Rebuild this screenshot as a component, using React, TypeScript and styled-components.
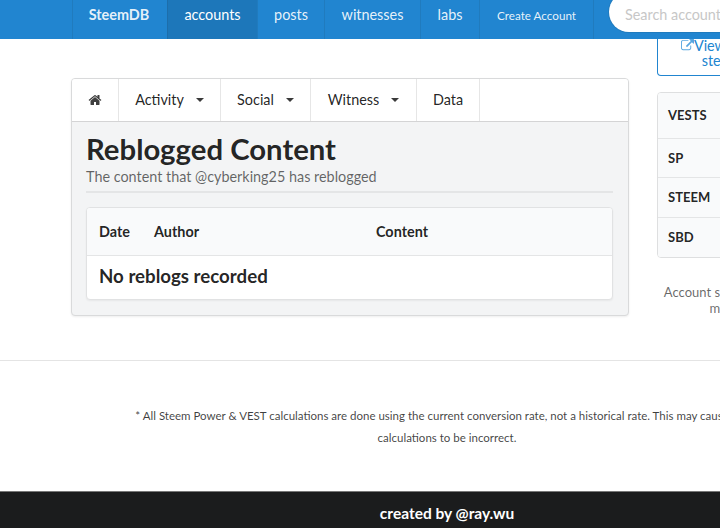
import React from "react";
import styled, { createGlobalStyle } from "styled-components";

const Global = createGlobalStyle`
  html, body { margin: 0; padding: 0; background: #fff; }
  body { width: 720px; height: 528px; overflow: hidden; font-family: Lato, "Liberation Sans", sans-serif; font-size: 14.4px; color: rgba(0,0,0,.87); }
  * { box-sizing: border-box; }
`;

const Page = styled.div`
  width: 894px;
  height: 528px;
  display: flex;
  flex-direction: column;
`;

const TopBar = styled.nav`
  height: 39px;
  flex: none;
  background: #2185d0;
  display: flex;
  padding-left: 72px;
  overflow: hidden;
`;

const NavItem = styled.a<{ $active?: boolean; $w: number; $bold?: boolean; $small?: boolean }>`
  width: ${(p) => p.$w}px;
  height: 39px;
  flex: none;
  display: flex;
  align-items: center;
  justify-content: center;
  padding-bottom: ${(p) => (p.$small ? 9 : 11)}px;
  padding-right: ${(p) => (p.$bold ? 2 : 0)}px;
  color: ${(p) => (p.$active ? "#fff" : "rgba(255,255,255,.9)")};
  background: ${(p) => (p.$active ? "rgba(0,0,0,.1)" : "transparent")};
  border-left: 1px solid rgba(34,36,38,.1);
  font-size: ${(p) => (p.$small ? 11.7 : 14.4)}px;
  font-weight: ${(p) => (p.$bold ? 700 : 400)};
`;

const LastDivider = styled.span`
  width: 1px;
  height: 39px;
  flex: none;
  background: rgba(34,36,38,.1);
`;

const SearchBox = styled.div`
  width: 220px;
  height: 40px;
  margin: -8px 0 0 15px;
  flex: none;
  background: #fff;
  border-radius: 20px;
  box-shadow: 0 0 0 1px rgba(34,36,38,.1);
  display: flex;
  align-items: flex-end;
  padding: 0 0 9px 16px;
  color: #c7c7c7;
  font-size: 14.4px;
  white-space: nowrap;
`;

const Main = styled.main`
  display: grid;
  grid-template-columns: 558px 166px;
  column-gap: 28px;
  padding-left: 71px;
  height: 322px;
  flex: none;
  border-bottom: 1px solid #e4e4e4;
  align-items: start;
`;

const LeftColumn = styled.section`
  padding-top: 39px;
`;

const Panel = styled.div`
  background: #f3f4f5;
  border: 1px solid #d9dadb;
  border-radius: 4px;
  box-shadow: 0 1px 2px rgba(34,36,38,.08);
  height: 238px;
  overflow: hidden;
`;

const TabBar = styled.div`
  height: 43px;
  background: #fff;
  border-bottom: 1px solid #d4d4d5;
  display: flex;
`;

const Tab = styled.div<{ $w: number }>`
  width: ${(p) => p.$w}px;
  flex: none;
  display: flex;
  align-items: center;
  justify-content: center;
  gap: 12px;
  padding-bottom: 1px;
  border-right: 1px solid #e6e6e6;
  font-size: 14.4px;
  color: rgba(0,0,0,.87);
`;

const Caret = styled.span`
  width: 0;
  height: 0;
  margin-top: 1px;
  border-left: 4px solid transparent;
  border-right: 4px solid transparent;
  border-top: 4px solid #3a3a3a;
`;

const PanelBody = styled.div`
  padding: 10px 15px 0 14px;
`;

const Title = styled.h1`
  margin: 0;
  font-size: 29.3px;
  line-height: 33px;
  font-weight: 700;
  color: rgba(0,0,0,.87);
`;

const Subtitle = styled.div`
  margin-top: 3px;
  font-size: 14.4px;
  line-height: 17px;
  color: rgba(0,0,0,.6);
  padding-bottom: 6px;
  border-bottom: 2px solid #e4e5e6;
`;

const DataCard = styled.div`
  margin-top: 14px;
  height: 93px;
  background: #fff;
  border: 1px solid #e1e2e3;
  border-radius: 4px;
  box-shadow: 0 1px 2px rgba(34,36,38,.06);
  overflow: hidden;
`;

const HeadRow = styled.div`
  height: 48px;
  background: #f9fafb;
  border-bottom: 1px solid #e4e5e6;
  display: grid;
  grid-template-columns: 55px 222px 1fr;
  align-items: center;
  padding: 0 0 1px 12px;
  font-weight: 700;
  font-size: 14.4px;
  color: rgba(0,0,0,.87);
`;

const EmptyRow = styled.div`
  padding: 0 0 4px 12px;
  height: 44px;
  display: flex;
  align-items: center;
  font-size: 18.7px;
  font-weight: 700;
  color: rgba(0,0,0,.87);
`;

const RightColumn = styled.aside``;

const ViewBox = styled.a`
  display: block;
  height: 38px;
  margin-top: -1px;
  border: 1px solid #2185d0;
  border-top: none;
  border-radius: 0 0 4px 4px;
  text-align: center;
  color: #2185d0;
  font-size: 14.4px;
  line-height: 15px;
  white-space: nowrap;
  svg { width: 13px; height: 13px; fill: #58a6e0; vertical-align: -1px; }
`;

const StatTable = styled.div`
  margin-top: 16px;
  border: 1px solid #dedfe0;
  border-radius: 4px;
  overflow: hidden;
  width: 100%;
`;

const StatRow = styled.div<{ $h: number }>`
  height: ${(p) => p.$h}px;
  background: #f9fafb;
  border-bottom: 1px solid #e4e5e6;
  display: flex;
  align-items: center;
  padding: 0 0 1px 10px;
  font-size: 13px;
  font-weight: 700;
  color: rgba(0,0,0,.87);
  &:last-child { border-bottom: none; }
`;

const Note = styled.div`
  margin-top: 26px;
  text-align: center;
  font-size: 13px;
  line-height: 16px;
  color: rgba(0,0,0,.6);
  white-space: nowrap;
`;

const Disclaimer = styled.p`
  margin: 0;
  height: 130px;
  flex: none;
  padding-top: 44px;
  text-align: center;
  font-size: 11.5px;
  line-height: 22px;
  color: rgba(0,0,0,.75);
`;

const Footer = styled.footer`
  flex: 1;
  background: #1b1c1d;
  border-top: 1px solid #777;
  color: #fff;
  text-align: center;
  font-size: 15.5px;
  font-weight: 700;
  line-height: 42px;
`;

const HomeIcon = () => (
  <svg viewBox="0 0 1792 1792" width="14" height="14" fill="#3f3f3f">
    <path d="M1472 992v480q0 26-19 45t-45 19h-384v-384h-256v384h-384q-26 0-45-19t-19-45v-480q0-1 .5-3t.5-3l575-474 575 474q1 2 1 6zm223-69l-62 74q-8 9-21 11h-3q-13 0-21-7l-692-577-692 577q-12 8-24 7-13-2-21-11l-62-74q-8-10-7-23.500t11-21.500l719-599q32-26 76-26t76 26l244 204v-195q0-14 9-23t23-9h192q14 0 23 9t9 23v408l219 182q10 8 11 21.500t-7 23.500z" />
  </svg>
);

const ExternalIcon = () => (
  <svg viewBox="0 0 1792 1792">
    <path d="M1408 928v320q0 119-84.500 203.500t-203.500 84.500h-832q-119 0-203.500-84.500t-84.500-203.500v-832q0-119 84.500-203.500t203.500-84.500h704q14 0 23 9t9 23v64q0 14-9 23t-23 9h-704q-66 0-113 47t-47 113v832q0 66 47 113t113 47h832q66 0 113-47t47-113v-320q0-14 9-23t23-9h64q14 0 23 9t9 23zm384-864v512q0 26-19 45t-45 19-45-19l-176-176-652 652q-10 10-23 10t-23-10l-114-114q-10-10-10-23t10-23l652-652-176-176q-19-19-19-45t19-45 45-19h512q26 0 45 19t19 45z" />
  </svg>
);

export default function App() {
  return (
    <>
      <Global />
      <Page>
        <TopBar>
          <NavItem $w={95} $bold>SteemDB</NavItem>
          <NavItem $w={90} $active>accounts</NavItem>
          <NavItem $w={67}>posts</NavItem>
          <NavItem $w={96}>witnesses</NavItem>
          <NavItem $w={59}>labs</NavItem>
          <NavItem $w={114} $small>Create Account</NavItem>
          <LastDivider />
          <SearchBox>Search accounts...</SearchBox>
        </TopBar>
        <Main>
          <LeftColumn>
            <Panel>
              <TabBar>
                <Tab $w={47}><HomeIcon /></Tab>
                <Tab $w={102}>Activity <Caret /></Tab>
                <Tab $w={90}>Social <Caret /></Tab>
                <Tab $w={106}>Witness <Caret /></Tab>
                <Tab $w={63}>Data</Tab>
              </TabBar>
              <PanelBody>
                <Title>Reblogged Content</Title>
                <Subtitle>The content that @cyberking25 has reblogged</Subtitle>
                <DataCard>
                  <HeadRow>
                    <span>Date</span>
                    <span>Author</span>
                    <span>Content</span>
                  </HeadRow>
                  <EmptyRow>No reblogs recorded</EmptyRow>
                </DataCard>
              </PanelBody>
            </Panel>
          </LeftColumn>
          <RightColumn>
            <ViewBox>
              <ExternalIcon />View account on<br />steemd.com
            </ViewBox>
            <StatTable>
              <StatRow $h={46}>VESTS</StatRow>
              <StatRow $h={39}>SP</StatRow>
              <StatRow $h={40}>STEEM</StatRow>
              <StatRow $h={39}>SBD</StatRow>
            </StatTable>
            <Note>Account snapshot updated<br />month ago</Note>
          </RightColumn>
        </Main>
        <Disclaimer>
          * All Steem Power &amp; VEST calculations are done using the current conversion rate, not a historical rate. This may cause some<br />
          calculations to be incorrect.
        </Disclaimer>
        <Footer>created by @ray.wu</Footer>
      </Page>
    </>
  );
}
